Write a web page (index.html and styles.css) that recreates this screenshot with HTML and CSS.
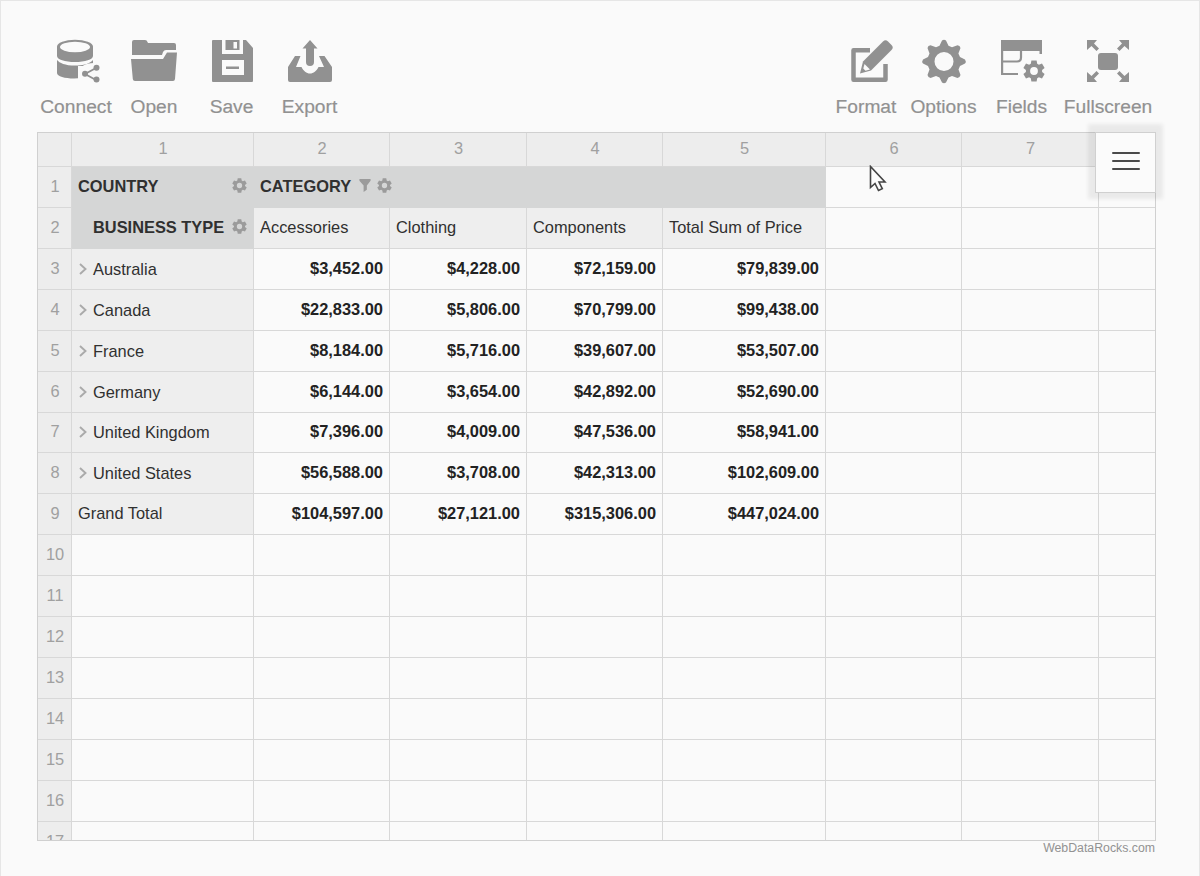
FILE: index.html
```html
<!DOCTYPE html>
<html lang="en">
<head>
<meta charset="utf-8">
<title>WebDataRocks Pivot</title>
<link rel="stylesheet" href="styles.css">
</head>
<body>
<svg class="defs" width="0" height="0">
  <defs>
    <symbol id="gear" viewBox="1 0.500 22 22"><path fill-rule="evenodd" d="M9.400 1h5.200l.6 3.200 1.700 1 3.100-1.200 2.600 4.500-2.500 2.100v1.800l2.500 2.100-2.600 4.500-3.100-1.200-1.700 1-.6 3.200H9.400l-.6-3.200-1.700-1L4 19l-2.600-4.500 2.500-2.100v-1.800L1.400 8.500 4 4l3.100 1.200 1.700-1zM12 7.600a3.900 3.900 0 1 0 0 7.800 3.900 3.900 0 0 0 0-7.800z"/></symbol>
  </defs>
</svg>
<main class="page">
  <nav class="toolbar">
    <div class="group">
      <a class="tool connect"><svg viewBox="0 0 44 44"><path d="M1 7.500V17C1 20.500 9 23 19 23S37 20.500 37 17V7.500zM1 21V34c0 3.300 8 5.500 17 5.500l4-.2V26.500l-3 .1C9 26.600 3.500 24 1 21zM22 26.500c6-.3 12-2 15-5.500v6H22z"/><ellipse cx="19" cy="7.800" rx="18" ry="7"/><ellipse class="hole" cx="19" cy="8" rx="15" ry="5.200"/><path class="cut" d="M22 40V33c1-5 7-9 16-9h6v20H22z"/><path class="line" stroke-width="1.800" d="M40 29l-11 6 11 6"/><circle cx="40.500" cy="28.700" r="3"/><circle cx="29" cy="34.700" r="3"/><circle cx="40.500" cy="40.500" r="3"/></svg><span>Connect</span></a>
      <a class="tool open"><svg viewBox="0 0 48 44"><path d="M2 15V3q0-2 2-2h11q2 0 2.500 2l.5 1h26q2 0 2 2v5H36q-2 0-3 2l-1 3H2zM1 20h32l4-6.500h10L45 40q-.2 2-2 2H5q-2 0-2.200-2z"/></svg><span>Open</span></a>
      <a class="tool save"><svg viewBox="0 0 44 44"><path fill-rule="evenodd" d="M2 1h10v14h21V1h3l7 8v33q0 1-1 1H3q-1 0-1-1V2q0-1 1-1zM12 21v15h22V21z"/><path d="M15.500 1h14v10h-14z"/><path class="hole" d="M23.500 3h3.500v6.500h-3.500z"/><path d="M16 27.500h13v2.500H16z"/></svg><span>Save</span></a>
      <a class="tool export"><svg viewBox="0 0 44 44"><path d="M22 1l7.500 8.500h-3.500V23a4 4 0 0 1-8 0V9.500h-3.500zM7 17h5.500L8 28h5.500c2 4 5 6.500 8.500 6.500s6.500-2.500 8.500-6.500H36l-5-11h5.500L44 28v13q0 2-2 2H2q-2 0-2-2V28z"/></svg><span>Export</span></a>
    </div>
    <div class="group">
      <a class="tool format"><svg viewBox="0 0 44 44"><path class="line" stroke-width="4.500" stroke-linejoin="round" d="M20 11.300H3.500v29.500h32V25"/><path d="M13 22.500L33 2.500q2.500-2.500 5 0l3.500 3.500q2.500 2.500 0 5L21 31.500 10 34.500z"/><path class="hole" d="M14.500 25l5.500 5.500-4.500 1.300-2.200-2.300z"/></svg><span>Format</span></a>
      <a class="tool options"><svg viewBox="0 0 44 44"><path fill-rule="evenodd" d="M20 1.500Q22 0 24 1.500l2.500 5.300 3.500 1.400 5.500-2q2.500.3 3 2.800l-2.100 5.500 1.600 3.500 5 2.500q1.500 2 0 4L38 27l-1.500 3.500 2 5.500q-.5 2.500-3 3L30 37l-3.500 1.500L24 43.500q-2 1.500-4 0L17.500 38.500 14 37l-5.500 2q-2.500-.5-3-3l2-5.500L6 27l-5-2.500q-1.500-2 0-4L6 18l1.500-3.500-2-5.500q.5-2.500 3-2.800l5.500 2 3.500-1.400zM22 13a9.500 9.500 0 1 0 0 19 9.500 9.500 0 0 0 0-19z"/></svg><span>Options</span></a>
      <a class="tool fields"><svg viewBox="0 0 44 44"><path d="M1 1h41v14h-2.500v-3H1z"/><path class="line" stroke-width="2.200" d="M2.100 8v27H18M2 22.500h15q4 0 4-4V11"/><svg x="23" y="21" width="22" height="22"><use href="#gear"/></svg></svg><span>Fields</span></a>
      <a class="tool fullscreen"><svg viewBox="0 0 44 44"><rect x="12" y="14" width="20" height="17" rx="3"/><path d="M1 1h10L8 4.500l5 5L10.500 12l-5-5L1 11zM43 1H33l3 3.500-5 5L33.500 12l5-5L43 11zM1 43h10l-3-3.500 5-5-2.500-2.500-5 5L1 33zM43 43H33l3-3.500-5-5 2.500-2.500 5 5L43 33z"/></svg><span>Fullscreen</span></a>
    </div>
  </nav>

  <section class="pivot">
    <div class="row top"><b></b><b>1</b><b>2</b><b>3</b><b>4</b><b>5</b><b>6</b><b>7</b><b></b></div>
    <div class="row heading"><b>1</b><div class="dim"><span>COUNTRY</span><svg class="cog"><use href="#gear"/></svg></div><div class="dim wide"><span>CATEGORY</span><svg class="funnel" viewBox="0 0 12 14"><path d="M0 0h12v2L8 7v4.500L4.500 14V7L0 2z"/></svg><svg class="cog"><use href="#gear"/></svg></div><i></i><i></i><i></i></div>
    <div class="row labels"><b>2</b><div class="dim sub"><span>BUSINESS TYPE</span><svg class="cog"><use href="#gear"/></svg></div><div class="head">Accessories</div><div class="head">Clothing</div><div class="head">Components</div><div class="head">Total Sum of Price</div><i></i><i></i><i></i></div>
    <div class="row"><b>3</b><div class="member"><svg class="chev" viewBox="0 0 8 12"><path d="M1 1l5.500 5L1 11"/></svg>Australia</div><strong>$3,452.00</strong><strong>$4,228.00</strong><strong>$72,159.00</strong><strong>$79,839.00</strong><i></i><i></i><i></i></div>
    <div class="row"><b>4</b><div class="member"><svg class="chev" viewBox="0 0 8 12"><path d="M1 1l5.500 5L1 11"/></svg>Canada</div><strong>$22,833.00</strong><strong>$5,806.00</strong><strong>$70,799.00</strong><strong>$99,438.00</strong><i></i><i></i><i></i></div>
    <div class="row"><b>5</b><div class="member"><svg class="chev" viewBox="0 0 8 12"><path d="M1 1l5.500 5L1 11"/></svg>France</div><strong>$8,184.00</strong><strong>$5,716.00</strong><strong>$39,607.00</strong><strong>$53,507.00</strong><i></i><i></i><i></i></div>
    <div class="row"><b>6</b><div class="member"><svg class="chev" viewBox="0 0 8 12"><path d="M1 1l5.500 5L1 11"/></svg>Germany</div><strong>$6,144.00</strong><strong>$3,654.00</strong><strong>$42,892.00</strong><strong>$52,690.00</strong><i></i><i></i><i></i></div>
    <div class="row"><b>7</b><div class="member"><svg class="chev" viewBox="0 0 8 12"><path d="M1 1l5.500 5L1 11"/></svg>United Kingdom</div><strong>$7,396.00</strong><strong>$4,009.00</strong><strong>$47,536.00</strong><strong>$58,941.00</strong><i></i><i></i><i></i></div>
    <div class="row"><b>8</b><div class="member"><svg class="chev" viewBox="0 0 8 12"><path d="M1 1l5.500 5L1 11"/></svg>United States</div><strong>$56,588.00</strong><strong>$3,708.00</strong><strong>$42,313.00</strong><strong>$102,609.00</strong><i></i><i></i><i></i></div>
    <div class="row"><b>9</b><div class="head">Grand Total</div><strong>$104,597.00</strong><strong>$27,121.00</strong><strong>$315,306.00</strong><strong>$447,024.00</strong><i></i><i></i><i></i></div>
    <div class="row"><b>10</b><i></i><i></i><i></i><i></i><i></i><i></i><i></i><i></i></div>
    <div class="row"><b>11</b><i></i><i></i><i></i><i></i><i></i><i></i><i></i><i></i></div>
    <div class="row"><b>12</b><i></i><i></i><i></i><i></i><i></i><i></i><i></i><i></i></div>
    <div class="row"><b>13</b><i></i><i></i><i></i><i></i><i></i><i></i><i></i><i></i></div>
    <div class="row"><b>14</b><i></i><i></i><i></i><i></i><i></i><i></i><i></i><i></i></div>
    <div class="row"><b>15</b><i></i><i></i><i></i><i></i><i></i><i></i><i></i><i></i></div>
    <div class="row"><b>16</b><i></i><i></i><i></i><i></i><i></i><i></i><i></i><i></i></div>
    <div class="row"><b>17</b><i></i><i></i><i></i><i></i><i></i><i></i><i></i><i></i></div>
  </section>
  <footer class="credit">WebDataRocks.com</footer>

  <button class="menu" aria-label="Menu"><span></span><span></span><span></span></button>
  <svg class="cursor" viewBox="0 0 18 27"><path d="M1.500 1.500v21l4.500-4 3.500 7 3.800-1.800-3.300-6.700H16z"/></svg>
</main>
</body>
</html>
```

FILE: styles.css
```css
* { box-sizing: border-box; }
body { margin: 0; background: #fafafa; font: 16.4px/20px "Liberation Sans", Arial, sans-serif; color: #303030; }
.defs { position: absolute; }
.page { position: relative; width: 1200px; height: 876px; overflow: hidden; padding: 38px 43px 0 36px; border: 1px solid #e6e6e6; border-bottom: 0; }

.toolbar { display: flex; justify-content: space-between; height: 93px; }
.group { display: flex; }
.tool { display: flex; flex-direction: column; align-items: center; color: #919191; font-size: 19.200px; line-height: 22px; }
.tool > svg { width: 44px; height: 44px; fill: #919191; margin-bottom: 13px; overflow: visible; }
.tool .hole, .tool .cut { fill: #fafafa; }
.tool .line { fill: none; stroke: #919191; }
.tool > span { white-space: nowrap; -webkit-text-stroke: .2px #919191; }
.connect { width: 78px; }
.open { width: 78px; }
.open > svg { width: 48px; }
.save { width: 77px; }
.export { width: 79px; }
.format { width: 76px; }
.options { width: 79px; }
.fields { width: 77px; }
.fullscreen { width: 96px; }
.connect > svg { margin-left: 4px; }
.format > svg { margin-left: 12px; }

.pivot { width: 1119px; height: 709px; overflow: hidden; border: 1px solid #d0d0d0; background: #fafafa; }
.row { display: grid; grid-template-columns: 34px 182px 136px 137px 136px 163px 136px 137px 56px; height: 40.930px; }
.row > * { border: solid #d8d8d8; border-width: 0 1px 1px 0; display: flex; align-items: center; padding: 0 6px; white-space: nowrap; }
.row > :last-child { border-right: 0; }
.row.top { height: 34px; }
.row b { justify-content: center; background: #ededed; color: #a0a0a0; font-weight: 400; padding: 0 0 2px 1px; }
.row.top b { padding-bottom: 4px; }
.row strong { justify-content: flex-end; color: #222; padding: 0 6px 2px 0; }
.row > .head { background: #eee; padding-bottom: 2px; }
.row > .dim { background: #d5d6d6; border-color: #d5d6d6; font-weight: 700; padding-bottom: 2px; }
.dim span { margin-right: auto; }
.row > .dim.wide { grid-column: span 4; }
.wide span { margin-right: 8px; }
.row > .dim.sub { padding-left: 21px; }
.cog { width: 15px; height: 15px; fill: #9b9b9b; }
.funnel { width: 12px; height: 13px; fill: #9b9b9b; margin-right: 6px; }
.member { background: #eee; }
.chev { width: 8px; height: 12px; margin: 0 6px 0 1px; fill: none; stroke: #aaa; stroke-width: 1.900; }

.credit { text-align: right; font-size: 12.300px; line-height: 14px; color: #929292; padding-right: 1px; }
.menu { position: absolute; left: 1094px; top: 131px; width: 61px; height: 61px; padding: 0 0 3px; border: 1px solid #d0d0d0; background: #fbfbfb; box-shadow: 0 -1px 4px 7px rgba(0,0,0,.065); display: flex; flex-direction: column; align-items: center; justify-content: center; gap: 6px; }
.menu span { width: 28px; height: 2px; border-radius: 1px; background: #4a4a4a; }
.cursor { position: absolute; left: 868px; top: 164px; width: 18px; height: 27px; fill: #fcfcfc; stroke: #444; stroke-width: 1.600; }
```
